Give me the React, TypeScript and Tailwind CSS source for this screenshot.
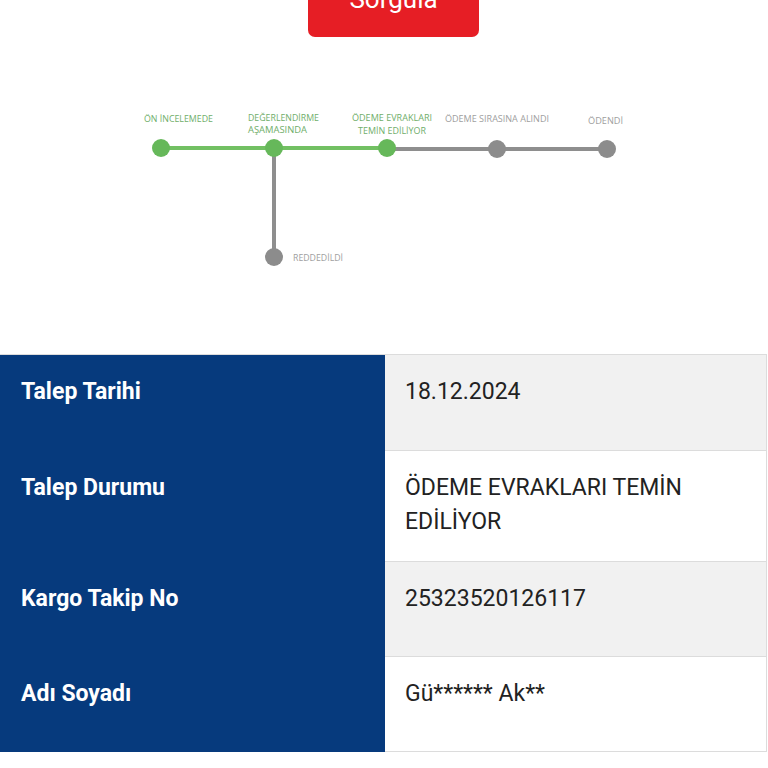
import React from "react";

const rows = [
  { label: "Talep Tarihi", value: "18.12.2024", bg: "bg-[#f1f1f1]", h: "h-[96px]" },
  { label: "Talep Durumu", value: "ÖDEME EVRAKLARI TEMİN EDİLİYOR", bg: "bg-white", h: "h-[111px]" },
  { label: "Kargo Takip No", value: "25323520126117", bg: "bg-[#f1f1f1]", h: "h-[95px]" },
  { label: "Adı Soyadı", value: "Gü****** Ak**", bg: "bg-white", h: "h-[95px]" },
];

const green = "#66b85a";
const greenText = "#6fae6a";
const gray = "#8c8c8c";
const grayText = "#a0a0a0";

function Stepper() {
  const font = "'Open Sans', 'Noto Sans', sans-serif";
  return (
    <svg width="768" height="317" viewBox="0 37 768 317" className="block">
      <line x1="161" y1="148" x2="387" y2="148" stroke="#72c063" strokeWidth="4" />
      <line x1="387" y1="149" x2="607" y2="149" stroke="#8e8e8e" strokeWidth="4" />
      <line x1="274" y1="148" x2="274" y2="257" stroke="#8e8e8e" strokeWidth="4" />
      <circle cx="161" cy="148" r="9" fill={green} />
      <circle cx="274" cy="148" r="9" fill={green} />
      <circle cx="387" cy="148" r="9" fill={green} />
      <circle cx="497" cy="149" r="9" fill={gray} />
      <circle cx="607" cy="149" r="9" fill={gray} />
      <circle cx="274" cy="257" r="9" fill={gray} />
      <g fontFamily={font} fontSize="9" >
        <text x="144" y="121.5" fill={greenText} textLength="69" lengthAdjust="spacingAndGlyphs">ÖN İNCELEMEDE</text>
        <text x="248" y="120.5" fill={greenText} textLength="71" lengthAdjust="spacingAndGlyphs">DEĞERLENDİRME</text>
        <text x="248" y="132.5" fill={greenText} textLength="59" lengthAdjust="spacingAndGlyphs">AŞAMASINDA</text>
        <text x="352" y="120.5" fill={greenText} textLength="80" lengthAdjust="spacingAndGlyphs">ÖDEME EVRAKLARI</text>
        <text x="358" y="133.5" fill={greenText} textLength="68" lengthAdjust="spacingAndGlyphs">TEMİN EDİLİYOR</text>
        <text x="445" y="121.5" fill={grayText} textLength="104" lengthAdjust="spacingAndGlyphs">ÖDEME SIRASINA ALINDI</text>
        <text x="588" y="124" fill={grayText} textLength="35" lengthAdjust="spacingAndGlyphs">ÖDENDİ</text>
        <text x="293" y="260.5" fill={grayText} textLength="50" lengthAdjust="spacingAndGlyphs">REDDEDİLDİ</text>
      </g>
    </svg>
  );
}

export default function App() {
  return (
    <div className="w-[768px] h-[768px] overflow-hidden bg-white" style={{ fontFamily: "Roboto, 'Liberation Sans', sans-serif" }}>
      <div className="flex justify-center h-[37px]">
        <div className="ml-[19px] mt-[-30px] w-[171px] h-[67px] bg-[#e61e25] rounded-b-[7px] flex justify-center pt-[15px] text-white text-[26px] leading-[28px]">
          Sorgula
        </div>
      </div>
      <Stepper />
      <div className="w-[767px] border-t border-[#dcdcdc]">
        {rows.map((r) => (
          <div key={r.label} className={`flex ${r.h}`}>
            <div className="w-[385px] bg-[#063a7d] text-white font-bold text-[23px] leading-[34px] pl-[21px] pt-[20px]">
              {r.label}
            </div>
            <div className={`flex-1 ${r.bg} border-b border-r border-[#dcdcdc] text-[#222] text-[23px] leading-[34px] pl-[20px] pr-[20px] pt-[20px]`}>
              {r.value}
            </div>
          </div>
        ))}
      </div>
    </div>
  );
}
